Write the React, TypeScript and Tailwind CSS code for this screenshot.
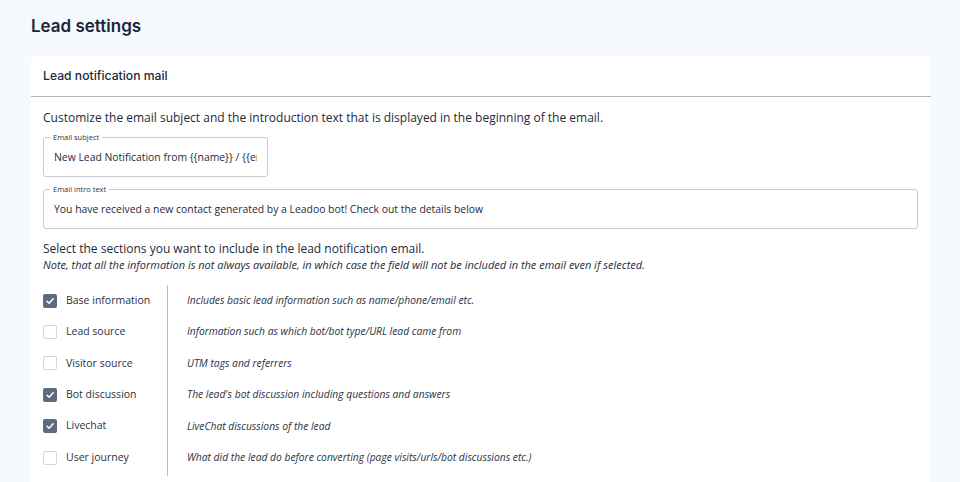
import React from 'react'

const sections = [
  { label: 'Base information', desc: 'Includes basic lead information such as name/phone/email etc.', checked: true },
  { label: 'Lead source', desc: 'Information such as which bot/bot type/URL lead came from', checked: false },
  { label: 'Visitor source', desc: 'UTM tags and referrers', checked: false },
  { label: 'Bot discussion', desc: "The lead's bot discussion including questions and answers", checked: true },
  { label: 'Livechat', desc: 'LiveChat discussions of the lead', checked: true },
  { label: 'User journey', desc: 'What did the lead do before converting (page visits/urls/bot discussions etc.)', checked: false },
]

function Checkbox({ checked }: { checked: boolean }) {
  if (checked) {
    return (
      <span className="flex h-[14px] w-[14px] items-center justify-center rounded-[2px] bg-[#5d6a80]">
        <svg width="10" height="10" viewBox="0 0 10 10" fill="none">
          <path d="M2 5.2 4.1 7.2 8.2 2.8" stroke="white" strokeWidth="1.5" strokeLinecap="round" strokeLinejoin="round" />
        </svg>
      </span>
    )
  }
  return <span className="block h-[14px] w-[14px] rounded-[2px] border border-[#d3d7dd] bg-white" />
}

function OutlinedField({ label, value, className }: { label: string; value: string; className: string }) {
  return (
    <fieldset className={`min-w-0 rounded-[3px] border border-[#c6cbd2] px-[10px] ${className}`}>
      <legend className="ml-[-4px] px-[3px] text-[7.5px] leading-[8px] text-[#2c3545]">{label}</legend>
      <div className="h-[35px] overflow-hidden whitespace-nowrap pt-[9px] text-[10.4px] leading-[14px] text-[#1f2a3b]">
        {value}
      </div>
    </fieldset>
  )
}

export default function App() {
  return (
    <div className="min-h-[482px] bg-[#f6f9fd] pl-[31px] pr-[29px] pt-[14px]" style={{ fontFamily: '"Open Sans", "Noto Sans", sans-serif' }}>
      <h1 className="text-[17px] font-semibold leading-[24px] text-[#1b2638]" style={{ fontFamily: 'Inter, "Noto Sans", sans-serif' }}>
        Lead settings
      </h1>

      <div className="mt-[18px] rounded-t-[5px] bg-white">
        <div className="flex h-[41px] items-center border-b border-[#b3b3b8] px-[12px]">
          <span className="text-[12.2px] font-medium text-[#1f2a3b]" style={{ fontFamily: 'Inter, "Noto Sans", sans-serif' }}>
            Lead notification mail
          </span>
        </div>

        <div className="px-[12px] pb-[9px] pt-[12px]">
          <p className="text-[12px] leading-[18px] text-[#1f2a3b]">
            Customize the email subject and the introduction text that is displayed in the beginning of the email.
          </p>

          <OutlinedField
            className="mt-[6px] w-[225px]"
            label="Email subject"
            value="New Lead Notification from {{name}} / {{email}}"
          />
          <OutlinedField
            className="mt-[8px] w-[875px]"
            label="Email intro text"
            value="You have received a new contact generated by a Leadoo bot! Check out the details below"
          />

          <p className="mt-[11px] text-[12px] leading-[18px] text-[#1f2a3b]">
            Select the sections you want to include in the lead notification email.
          </p>
          <p className="text-[11px] italic leading-[14px] text-[#1f2a3b]">
            Note, that all the information is not always available, in which case the field will not be included in the email even if selected.
          </p>

          <div className="mt-[13px] flex">
            <div className="w-[125px] border-r border-[#b8bcc3] pb-[3px]">
              {sections.map((s) => (
                <div key={s.label} className="flex h-[31.4px] items-center gap-[9px]">
                  <Checkbox checked={s.checked} />
                  <span className="text-[10.5px] text-[#2a3344]">{s.label}</span>
                </div>
              ))}
            </div>
            <div className="pl-[19px]">
              {sections.map((s) => (
                <div key={s.label} className="flex h-[31.4px] items-center text-[10.3px] italic text-[#2a3344]">
                  {s.desc}
                </div>
              ))}
            </div>
          </div>
        </div>
      </div>
    </div>
  )
}
